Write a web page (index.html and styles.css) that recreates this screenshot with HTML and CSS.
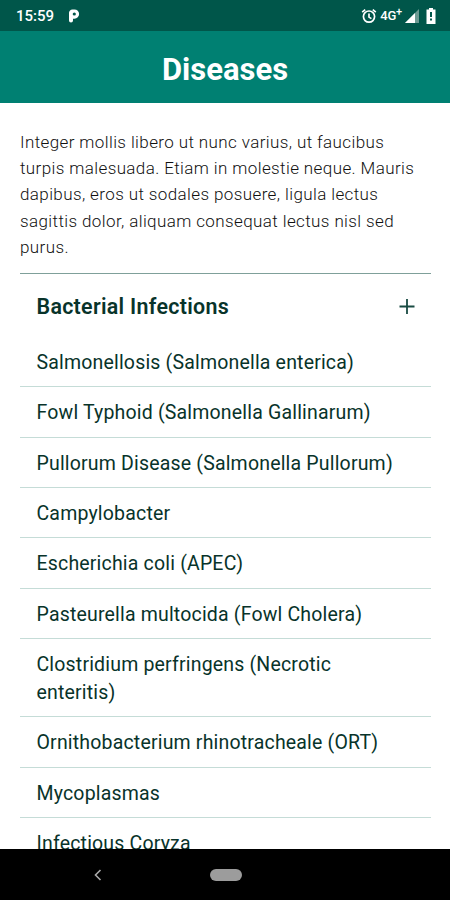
FILE: index.html
```html
<!DOCTYPE html>
<html lang="en">
  <head>
    <meta charset="UTF-8" />
    <meta name="viewport" content="width=device-width, initial-scale=1.0" />
    <title>Diseases</title>
    <link rel="stylesheet" href="styles.css">
  </head>
  <body>
    <div class="status-bar">
      <span class="time">15:59</span>
      <svg class="p-icon" width="12" height="14" viewBox="0 0 12 14">
        <path d="M1 7V4.5A3.5 3.5 0 0 1 4.5 .5H6.5a4.6 4.6 0 0 1 0 9.2H5v1.8a2 2 0 0 1-4 0z" fill="#fff" />
        <circle cx="6.3" cy="5" r="1.6" fill="#00564a" />
      </svg>
      <div class="status-icons">
        <svg width="16" height="16" viewBox="0 0 16 16" fill="none" stroke="#fff" stroke-width="1.7">
          <circle cx="8" cy="8.6" r="5.6" />
          <path d="M8 5.5v3.6l2.4 1.5M1.2 4.2l3-2.6M14.8 4.2l-3-2.6" />
        </svg>
        <span class="network">4G<sup>+</sup></span>
        <svg width="14" height="14" viewBox="0 0 14 14">
          <path d="M0 14L14 0v14z" fill="#6c9a93" />
          <path d="M0 14L10 4v10z" fill="#fff" />
        </svg>
        <svg class="battery" width="10" height="16" viewBox="0 0 10 16">
          <path d="M3 0h4v1.6h2.5V16h-9V1.6H3z" fill="#fff" />
          <path d="M4 4h2v5H4zM4 10.5h2v2H4z" fill="#00564a" />
        </svg>
      </div>
    </div>
    <header>
      <h1>Diseases</h1>
    </header>
    <main>
      <p class="intro">Integer mollis libero ut nunc varius, ut faucibus turpis malesuada. Etiam in molestie neque. Mauris dapibus, eros ut sodales posuere, ligula lectus sagittis dolor, aliquam consequat lectus nisl sed purus.</p>
      <section class="group">
        <div class="group-title">
          <h2>Bacterial Infections</h2>
          <svg width="16" height="16" viewBox="0 0 16 16"><path d="M8 0v15M.5 7.5h15" stroke="#194b43" stroke-width="1.8" /></svg>
        </div>
        <ul class="diseases">
          <li>Salmonellosis (Salmonella enterica)</li>
          <li>Fowl Typhoid (Salmonella Gallinarum)</li>
          <li>Pullorum Disease (Salmonella Pullorum)</li>
          <li>Campylobacter</li>
          <li>Escherichia coli (APEC)</li>
          <li>Pasteurella multocida (Fowl Cholera)</li>
          <li>Clostridium perfringens (Necrotic enteritis)</li>
          <li>Ornithobacterium rhinotracheale (ORT)</li>
          <li>Mycoplasmas</li>
          <li>Infectious Coryza</li>
        </ul>
      </section>
    </main>
    <nav class="nav-bar">
      <svg class="back" width="8" height="12" viewBox="0 0 8 12"><path d="M6.5 1L1.5 6l5 5" fill="none" stroke="#aaa" stroke-width="1.6" /></svg>
      <div class="home"></div>
    </nav>
  </body>
</html>
```
FILE: styles.css
```css
* {
  margin: 0;
  padding: 0;
  box-sizing: border-box;
}
body {
  height: 900px;
  display: flex;
  flex-direction: column;
  overflow: hidden;
  font-family: Roboto, sans-serif;
  background-color: #fff;
  color: #08332a;
}
.status-bar {
  flex: none;
  height: 31px;
  display: flex;
  align-items: center;
  padding: 1px 14px 0 16px;
  background-color: #00564a;
  color: #fff;
  font-size: 15px;
  font-weight: 500;
}
.p-icon {
  margin-left: 14px;
}
.status-icons {
  display: flex;
  align-items: center;
  margin-left: auto;
}
.network {
  margin: 0 3px 0 3px;
  font-size: 13px;
  line-height: 14px;
  letter-spacing: -0.2px;
}
.network sup {
  font-size: 11px;
  line-height: 0;
}
.battery {
  margin-left: 7px;
}
header {
  flex: none;
  height: 72px;
  display: flex;
  align-items: center;
  justify-content: center;
  padding-top: 5px;
  background-color: #008072;
  color: #fff;
}
h1 {
  font-size: 31px;
  font-weight: 700;
  line-height: 36px;
}
main {
  flex: 1;
  min-height: 0;
  overflow: hidden;
  padding: 26px 19px 0 20px;
}
.intro {
  padding-right: 12px;
  color: #111;
  font-size: 17px;
  font-weight: 300;
  line-height: 26.2px;
  letter-spacing: 0.39px;
}
.group {
  margin-top: 13px;
  border-top: 1px solid #7fa09a;
}
.group-title {
  height: 63px;
  display: flex;
  align-items: center;
  justify-content: space-between;
  padding: 2px 16px 0 16.5px;
}
h2 {
  font-size: 21.4px;
  font-weight: 600;
  letter-spacing: 0.3px;
}
.diseases {
  list-style: none;
}
.diseases li {
  padding: 12px 17px 9px 16.5px;
  border-bottom: 1px solid #c5dcd7;
  font-size: 19.5px;
  line-height: 28.3px;
  letter-spacing: 0.18px;
}
.nav-bar {
  flex: none;
  height: 51px;
  display: flex;
  align-items: center;
  padding-left: 94px;
  background-color: #000;
}
.home {
  width: 32px;
  height: 12px;
  margin-left: 108px;
  border-radius: 6px;
  background-color: #9c9c9c;
}
```
